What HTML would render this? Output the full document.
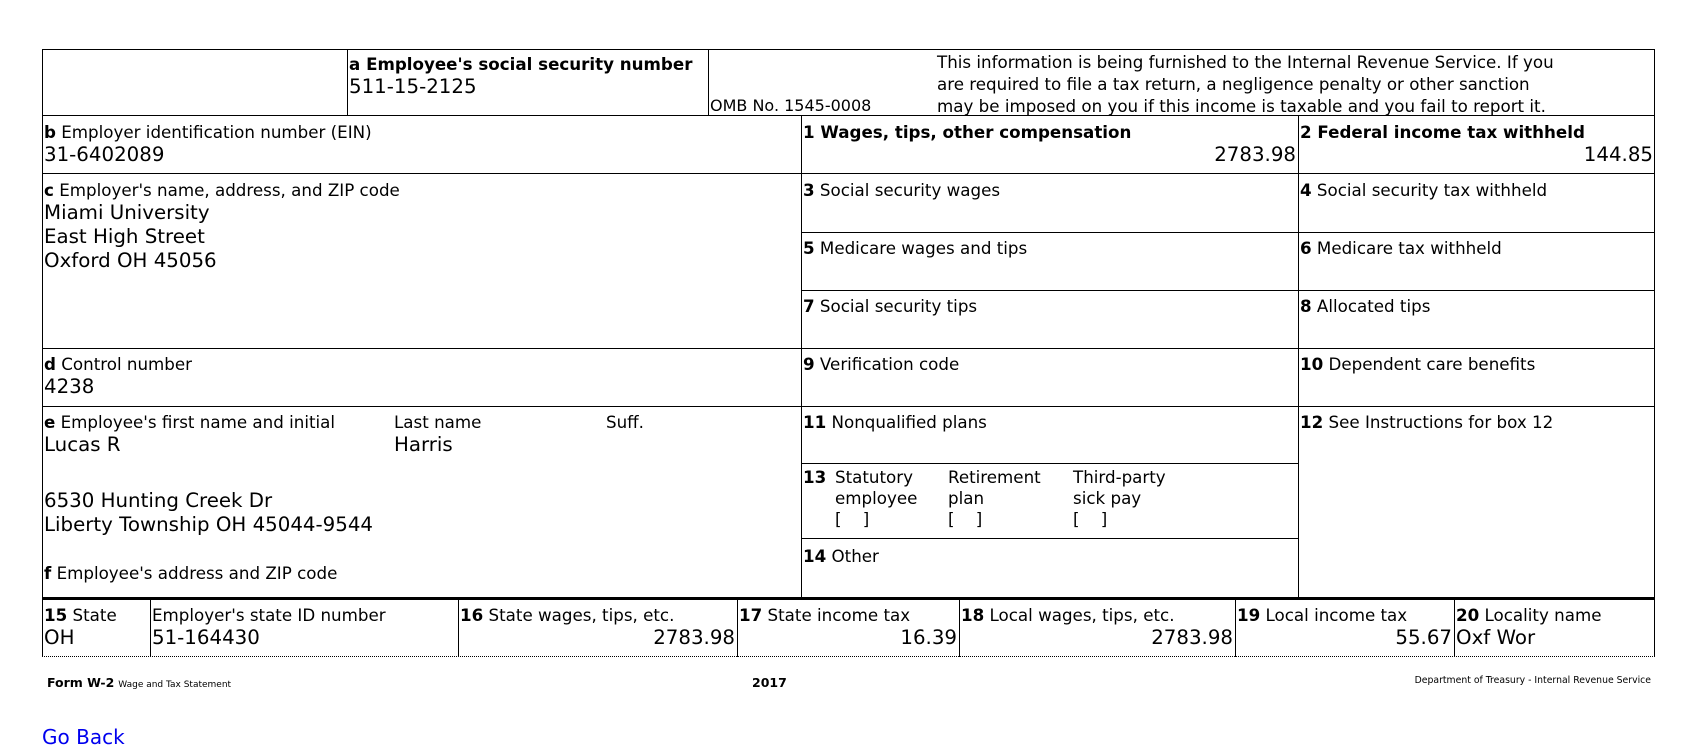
<!DOCTYPE html>
<html><head><meta charset="utf-8"><style>
body{margin:0;background:#fff;font-family:"DejaVu Sans",Verdana,sans-serif;color:#000;width:1699px;height:742px;overflow:hidden;position:relative}
.c{position:absolute;box-sizing:border-box;font-size:16.7px;line-height:20px;padding:2px 2px 0 2px;white-space:nowrap}
.l{position:absolute;background:#000}
.v{font-size:19.8px;line-height:24px;margin-top:1px}
.r{text-align:right}
b{font-weight:bold}
</style></head><body>
<div class="l" style="left:42px;top:49px;width:1613px;height:1px"></div>
<div class="l" style="left:42px;top:49px;width:1px;height:608px"></div>
<div class="l" style="left:1654px;top:49px;width:1px;height:608px"></div>
<div style="position:absolute;left:42px;top:656px;width:1613px;border-top:1px dotted #000"></div>
<div class="l" style="left:42px;top:115px;width:1613px;height:1px"></div>
<div class="l" style="left:42px;top:173px;width:1613px;height:1px"></div>
<div class="l" style="left:801px;top:232px;width:853px;height:1px"></div>
<div class="l" style="left:801px;top:290px;width:853px;height:1px"></div>
<div class="l" style="left:42px;top:348px;width:1613px;height:1px"></div>
<div class="l" style="left:42px;top:406px;width:1613px;height:1px"></div>
<div class="l" style="left:801px;top:463px;width:497px;height:1px"></div>
<div class="l" style="left:801px;top:538px;width:497px;height:1px"></div>
<div class="l" style="left:42px;top:597px;width:1613px;height:3px"></div>
<div class="l" style="left:347px;top:49px;width:1px;height:66px"></div>
<div class="l" style="left:708px;top:49px;width:1px;height:66px"></div>
<div class="l" style="left:801px;top:115px;width:1px;height:483px"></div>
<div class="l" style="left:1298px;top:115px;width:1px;height:483px"></div>
<div class="l" style="left:150px;top:598px;width:1px;height:59px"></div>
<div class="l" style="left:458px;top:598px;width:1px;height:59px"></div>
<div class="l" style="left:737px;top:598px;width:1px;height:59px"></div>
<div class="l" style="left:959px;top:598px;width:1px;height:59px"></div>
<div class="l" style="left:1235px;top:598px;width:1px;height:59px"></div>
<div class="l" style="left:1454px;top:598px;width:1px;height:59px"></div>

<div class="c" style="left:347px;top:52px;width:360px"><b>a Employee's social security number</b><div class="v">511-15-2125</div></div>
<div class="c" style="left:708px;top:94px;font-size:16px">OMB No. 1545-0008</div>
<div class="c" style="left:935px;top:49px;width:720px;line-height:22px">This information is being furnished to the Internal Revenue Service. If you<br>are required to file a tax return, a negligence penalty or other sanction<br>may be imposed on you if this income is taxable and you fail to report it.</div>

<div class="c" style="left:42px;top:120px;width:759px"><b>b</b> Employer identification number (EIN)<div class="v">31-6402089</div></div>
<div class="c" style="left:801px;top:120px;width:497px"><b>1 Wages, tips, other compensation</b><div class="v r">2783.98</div></div>
<div class="c" style="left:1298px;top:120px;width:357px"><b>2 Federal income tax withheld</b><div class="v r">144.85</div></div>

<div class="c" style="left:42px;top:178px;width:759px"><b>c</b> Employer's name, address, and ZIP code<div class="v">Miami University<br>East High Street<br>Oxford OH 45056</div></div>
<div class="c" style="left:801px;top:178px"><b>3</b> Social security wages</div>
<div class="c" style="left:1298px;top:178px"><b>4</b> Social security tax withheld</div>
<div class="c" style="left:801px;top:236px"><b>5</b> Medicare wages and tips</div>
<div class="c" style="left:1298px;top:236px"><b>6</b> Medicare tax withheld</div>
<div class="c" style="left:801px;top:294px"><b>7</b> Social security tips</div>
<div class="c" style="left:1298px;top:294px"><b>8</b> Allocated tips</div>

<div class="c" style="left:42px;top:352px;width:759px"><b>d</b> Control number<div class="v">4238</div></div>
<div class="c" style="left:801px;top:352px"><b>9</b> Verification code</div>
<div class="c" style="left:1298px;top:352px"><b>10</b> Dependent care benefits</div>

<div class="c" style="left:42px;top:410px;width:340px"><b>e</b> Employee's first name and initial<div class="v">Lucas R</div></div>
<div class="c" style="left:392px;top:410px">Last name<div class="v">Harris</div></div>
<div class="c" style="left:604px;top:410px">Suff.</div>
<div class="c v" style="left:42px;top:486px">6530 Hunting Creek Dr<br>Liberty Township OH 45044-9544</div>
<div class="c" style="left:42px;top:561px"><b>f</b> Employee's address and ZIP code</div>
<div class="c" style="left:801px;top:410px"><b>11</b> Nonqualified plans</div>
<div class="c" style="left:1298px;top:410px"><b>12</b> See Instructions for box 12</div>
<div class="c" style="left:801px;top:465px;line-height:21px"><b>13</b></div>
<div class="c" style="left:833px;top:465px;line-height:21px">Statutory<br>employee<br>[&nbsp;&nbsp;&nbsp;&nbsp;]</div>
<div class="c" style="left:946px;top:465px;line-height:21px">Retirement<br>plan<br>[&nbsp;&nbsp;&nbsp;&nbsp;]</div>
<div class="c" style="left:1071px;top:465px;line-height:21px">Third-party<br>sick pay<br>[&nbsp;&nbsp;&nbsp;&nbsp;]</div>
<div class="c" style="left:801px;top:544px"><b>14</b> Other</div>

<div class="c" style="left:42px;top:603px;width:108px"><b>15</b> State<div class="v">OH</div></div>
<div class="c" style="left:150px;top:603px;width:308px">Employer's state ID number<div class="v">51-164430</div></div>
<div class="c" style="left:458px;top:603px;width:279px"><b>16</b> State wages, tips, etc.<div class="v r">2783.98</div></div>
<div class="c" style="left:737px;top:603px;width:222px"><b>17</b> State income tax<div class="v r">16.39</div></div>
<div class="c" style="left:959px;top:603px;width:276px"><b>18</b> Local wages, tips, etc.<div class="v r">2783.98</div></div>
<div class="c" style="left:1235px;top:603px;width:219px"><b>19</b> Local income tax<div class="v r">55.67</div></div>
<div class="c" style="left:1454px;top:603px;width:200px"><b>20</b> Locality name<div class="v">Oxf Wor</div></div>

<div style="position:absolute;left:47px;top:675px;font-size:12.5px"><b>Form W-2</b> <span style="font-size:9px">Wage and Tax Statement</span></div>
<div style="position:absolute;left:752px;top:675px;font-size:12.5px"><b>2017</b></div>
<div style="position:absolute;right:48px;top:675px;font-size:9.3px">Department of Treasury - Internal Revenue Service</div>
<div style="position:absolute;left:42px;top:725px;font-size:20px;color:#00e">Go Back</div>
</body></html>
